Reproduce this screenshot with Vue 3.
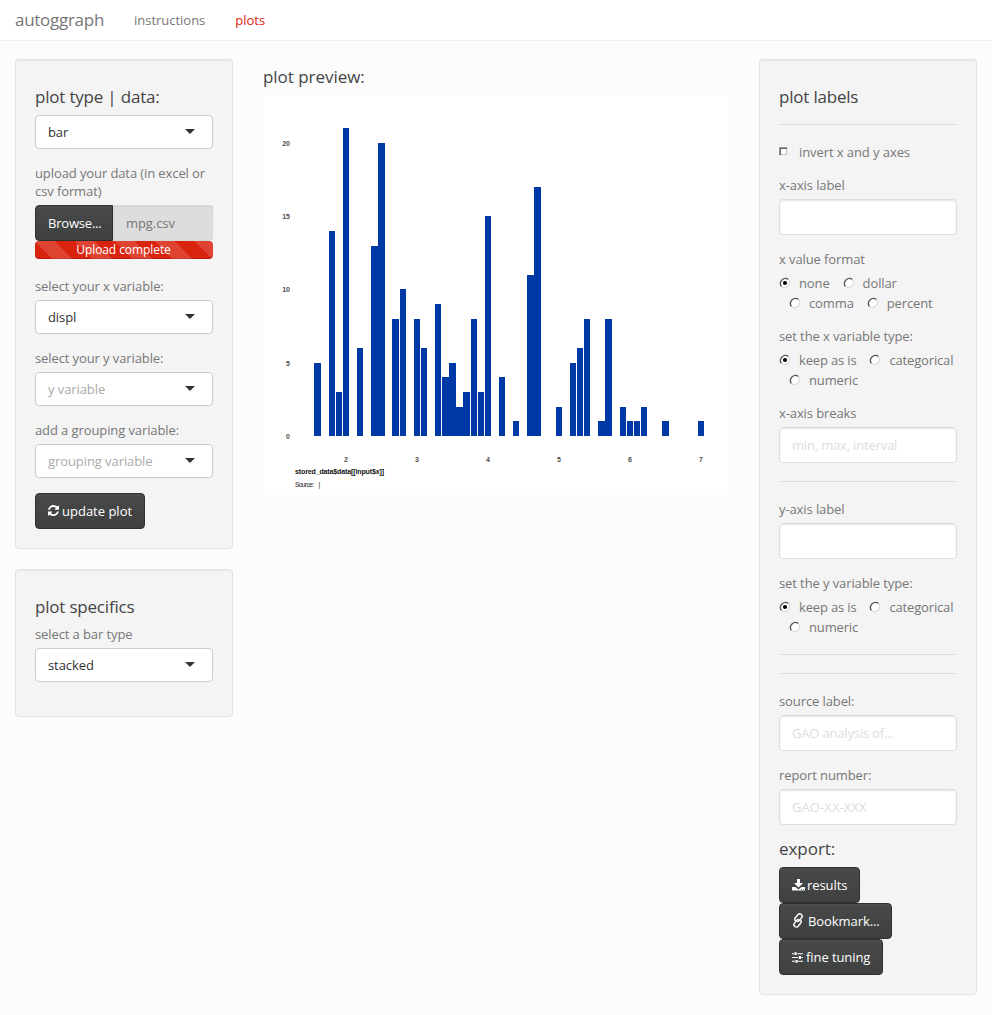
<script setup>
const bars = [
  [314, 7, 5], [329, 6, 14], [336, 6, 3], [343, 6, 21], [357, 6, 6],
  [371, 7, 13], [378, 7, 20], [392, 7, 8], [400, 6, 10], [414, 6, 8],
  [421, 6, 6], [435, 6, 9], [442, 7, 4], [449, 7, 5], [456, 7, 2],
  [463, 7, 3], [471, 6, 8], [478, 6, 3], [485, 6, 15], [499, 6, 4],
  [513, 6, 1], [527, 7, 11], [534, 7, 17], [556, 6, 2], [570, 6, 5],
  [577, 6, 6], [584, 6, 8], [598, 7, 1], [605, 7, 8], [620, 6, 2],
  [627, 6, 1], [634, 6, 1], [641, 6, 2], [662, 7, 1], [698, 6, 1],
]
const heights = { 1: 15, 2: 29, 3: 44, 4: 59, 5: 73, 6: 88, 8: 117, 9: 132, 10: 147, 11: 161, 13: 190, 14: 205, 15: 220, 17: 249, 20: 293, 21: 308 }
const xTicks = [2, 3, 4, 5, 6, 7]
const yTicks = [[20, 51], [15, 124], [10, 197], [5, 271], [0, 344]]
const xFormats = ['none', 'dollar', 'comma', 'percent']
const varTypes = ['keep as is', 'categorical', 'numeric']
</script>

<template>
  <div class="page">
    <nav class="navbar">
      <a class="brand">autoggraph</a>
      <a class="tab">instructions</a>
      <a class="tab active">plots</a>
    </nav>
    <main class="columns">
      <aside class="side">
        <section class="well">
          <h4>plot type | data:</h4>
          <div class="select group">bar</div>
          <label class="lbl">upload your data (in excel or csv format)</label>
          <div class="file">
            <span class="btn browse">Browse...</span>
            <span class="filename">mpg.csv</span>
          </div>
          <div class="progress">Upload complete</div>
          <label class="lbl">select your x variable:</label>
          <div class="select group">displ</div>
          <label class="lbl">select your y variable:</label>
          <div class="select group empty">y variable</div>
          <label class="lbl">add a grouping variable:</label>
          <div class="select group empty">grouping variable</div>
          <button class="btn update">
            <svg class="icon refresh" viewBox="0 0 1536 1664"><path d="M1511 928q0 5-1 7-64 268-268 434.500t-478 166.500q-146 0-282.500-55t-243.500-157l-129 129q-19 19-45 19t-45-19-19-45v-448q0-26 19-45t45-19h448q26 0 45 19t19 45-19 45l-137 137q71 66 161 102t187 36q134 0 250-65t186-179q11-17 53-117 8-23 30-23h192q13 0 22.500 9.500t9.500 22.500zm25-800v448q0 26-19 45t-45 19h-448q-26 0-45-19t-19-45 19-45l138-138q-148-137-349-137-134 0-250 65t-186 179q-11 17-53 117-8 23-30 23h-199q-13 0-22.500-9.500t-9.500-22.500v-7q65-268 270-434.500t480-166.500q146 0 284 55.500t245 156.500l130-129q19-19 45-19t45 19 19 45z" /></svg>
            <span>update plot</span>
          </button>
        </section>
        <section class="well">
          <h4>plot specifics</h4>
          <label class="lbl">select a bar type</label>
          <div class="select group">stacked</div>
        </section>
      </aside>

      <section class="preview">
        <h4>plot preview:</h4>
        <svg class="chart" width="466" height="400" viewBox="0 0 466 400">
          <g fill="#0039a6" shape-rendering="crispEdges">
            <rect v-for="b in bars" :key="b[0]" :x="b[0] - 263" :y="341 - heights[b[2]]" :width="b[1]" :height="heights[b[2]]" />
          </g>
          <g class="tick">
            <text v-for="t in yTicks" :key="t[0]" x="27" :y="t[1]" text-anchor="end">{{ t[0] }}</text>
            <text v-for="t in xTicks" :key="t" :x="83 + (t - 2) * 71" y="367" text-anchor="middle">{{ t }}</text>
          </g>
          <text class="axis-title" x="32" y="379" textLength="89">stored_data$data[[input$x]]</text>
          <text class="source" x="32" y="392" textLength="19">Source:</text>
          <text class="source" x="55.500" y="391.500">|</text>
        </svg>
      </section>

      <aside class="side">
        <section class="well">
          <h4>plot labels</h4>
          <hr>
          <div class="check group"><i class="box"></i><span>invert x and y axes</span></div>
          <label class="lbl">x-axis label</label>
          <input class="field group" type="text">
          <label class="lbl">x value format</label>
          <div class="radios">
            <span v-for="(o, i) in xFormats" :key="o" class="radio">
              <svg class="dot" viewBox="0 0 12 12"><circle cx="6" cy="6" r="5" fill="#fff" /><path class="dark" d="M2.500 9.500A5 5 0 0 1 9.500 2.500" /><path class="light" d="M9.500 2.500A5 5 0 0 1 2.500 9.500" /><circle v-if="i === 0" cx="6" cy="6" r="2.100" fill="#000" /></svg>{{ o }}
            </span>
          </div>
          <label class="lbl">set the x variable type:</label>
          <div class="radios types">
            <span v-for="(o, i) in varTypes" :key="o" class="radio">
              <svg class="dot" viewBox="0 0 12 12"><circle cx="6" cy="6" r="5" fill="#fff" /><path class="dark" d="M2.500 9.500A5 5 0 0 1 9.500 2.500" /><path class="light" d="M9.500 2.500A5 5 0 0 1 2.500 9.500" /><circle v-if="i === 0" cx="6" cy="6" r="2.100" fill="#000" /></svg>{{ o }}
            </span>
          </div>
          <label class="lbl">x-axis breaks</label>
          <input class="field" type="text" placeholder="min, max, interval">
          <hr>
          <label class="lbl">y-axis label</label>
          <input class="field group" type="text">
          <label class="lbl">set the y variable type:</label>
          <div class="radios types last">
            <span v-for="(o, i) in varTypes" :key="o" class="radio">
              <svg class="dot" viewBox="0 0 12 12"><circle cx="6" cy="6" r="5" fill="#fff" /><path class="dark" d="M2.500 9.500A5 5 0 0 1 9.500 2.500" /><path class="light" d="M9.500 2.500A5 5 0 0 1 2.500 9.500" /><circle v-if="i === 0" cx="6" cy="6" r="2.100" fill="#000" /></svg>{{ o }}
            </span>
          </div>
          <hr>
          <hr>
          <label class="lbl">source label:</label>
          <input class="field group" type="text" placeholder="GAO analysis of...">
          <label class="lbl">report number:</label>
          <input class="field group report" type="text" placeholder="GAO-XX-XXX">
          <h4 class="export">export:</h4>
          <div class="buttons">
            <button class="btn results">
              <svg class="icon download" viewBox="0 0 13 12"><path d="M5 0h3v4h3L6.500 8.500 2 4h3zM.5 8h3l3 2.500 3-2.500h3q.5 0 .5.5v2.500q0 .5-.5.5h-12q-.5 0-.5-.5v-2.500q0-.5.5-.5z" /><path class="hole" d="M9 10h1v.8H9zM11 10h1v.8h-1z" /></svg>
              <span>results</span>
            </button>
            <button class="btn bookmark">
              <svg class="icon link" viewBox="0 0 12 13"><g transform="rotate(40 6 6.500)"><path d="M4.400 8.400A2.400 2.400 0 0 1 2.200 6V2.200a2.400 2.400 0 0 1 4.800 0V6a1.800 1.800 0 0 1-1.200 1.800" /><path d="M7.600 4.600A2.400 2.400 0 0 1 9.800 7V10.800a2.400 2.400 0 0 1-4.800 0V7a1.800 1.800 0 0 1 1.200-1.800" /></g></svg>
              <span>Bookmark...</span>
            </button>
            <button class="btn tuning">
              <svg class="icon sliders" viewBox="0 0 11 11"><path d="M0 1.200h2v1H0zM5.500 1.200H11v1H5.500zM2.500.3h2.200v2.800H2.500zM0 5h6v1H0zM9.500 5H11v1H9.500zM6.800 4.100H9v2.800H6.800zM0 8.800h3v1H0zM6.300 8.800H11v1H6.300zM3.500 7.900h2.200v2.800H3.500z" /></svg>
              <span>fine tuning</span>
            </button>
          </div>
        </section>
      </aside>
    </main>
  </div>
</template>

<style>
body { margin: 0; background: #fcfcfc; }
</style>

<style scoped>
.page {
  min-height: 1015px;
  background: #fcfcfc;
  color: #777;
  font: 13px/18px "Open Sans", "Noto Sans", sans-serif;
  letter-spacing: -.08px;
}
.page *, .page *::after { box-sizing: border-box; }
.navbar {
  display: flex;
  align-items: center;
  height: 41px;
  padding: 0 15px;
  background: #fff;
  border-bottom: 1px solid #eee;
}
.brand { width: 89px; font-size: 17px; letter-spacing: -.28px; margin-right: 30px; }
.tab { margin-right: 30px; letter-spacing: -.02px; }
.tab.active { color: #d9230f; }
.columns {
  display: grid;
  grid-template-columns: 218px 466px 218px;
  gap: 30px;
  padding: 18px 15px 0;
  align-items: start;
}
.well {
  padding: 19px;
  margin-bottom: 20px;
  background: #f4f4f4;
  border: 1px solid #e3e3e3;
  border-radius: 4px;
  box-shadow: inset 0 1px 1px rgba(0, 0, 0, .05);
}
h4 {
  margin: 9px 0;
  color: #444;
  font-size: 17px;
  font-weight: 400;
  line-height: 18px;
  letter-spacing: -.2px;
}
.preview h4, h4.export { letter-spacing: -.04px; }
hr { margin: 18px 0; border: 0; border-top: 1px solid #ddd; }
.lbl { display: block; margin-bottom: 5px; letter-spacing: -.1px; }
.group { margin-bottom: 15px; }
.select {
  display: flex;
  align-items: center;
  justify-content: space-between;
  height: 34px;
  padding: 0 17px 0 12px;
  color: #333;
  background: #fff;
  border: 1px solid #ccc;
  border-radius: 4px;
}
.select::after {
  content: "";
  border: solid transparent;
  border-width: 5px 5px 0;
  border-top-color: #333;
  margin-top: -1px;
}
.select.empty { color: #aaa; }
.btn {
  display: flex;
  align-items: center;
  height: 36px;
  padding: 0 12px;
  color: #fff;
  font: inherit;
  letter-spacing: -.08px;
  white-space: nowrap;
  background: linear-gradient(#4f5151, #474949 6%, #3f4141);
  border: 1px solid #2e2f2f;
  border-radius: 4px;
}
.update { width: 110px; letter-spacing: 0; }
.icon { flex: none; fill: #fff; }
.refresh { width: 11px; height: 12px; margin-right: 3px; }
.download { width: 13px; height: 12px; margin-right: 2px; margin-top: -1px; }
.hole { fill: #444646; }
.link { width: 12px; height: 13px; margin-right: 4px; margin-top: -2px; fill: none; stroke: #fff; stroke-width: 1.400; overflow: visible; }
.sliders { width: 11px; height: 11px; margin-right: 3px; margin-top: 1px; }
.file { display: flex; }
.browse { border-radius: 4px 0 0 4px; width: 78px; letter-spacing: -.2px; }
.filename {
  flex: 1;
  height: 36px;
  padding: 9px 13px;
  background: #ddd;
  border-radius: 0 4px 4px 0;
  box-shadow: inset 0 0 0 1px #d8d8d8, inset 0 1px 2px rgba(0, 0, 0, .1);
}
.progress {
  height: 18px;
  margin-bottom: 18px;
  padding-right: 1px;
  color: #fff;
  font-size: 12px;
  text-align: center;
  background-color: #d9230f;
  background-image: linear-gradient(45deg, rgba(255, 255, 255, .15) 25%, transparent 25%, transparent 50%, rgba(255, 255, 255, .15) 50%, rgba(255, 255, 255, .15) 75%, transparent 75%);
  background-size: 40px 40px;
  border-radius: 4px;
  box-shadow: inset 0 -1px 0 rgba(0, 0, 0, .15);
}
.chart { display: block; background: #fff; letter-spacing: 0; }
.tick { font: bold 7px "Liberation Sans", sans-serif; fill: #4d4d4d; }
.axis-title { font: bold 7px "Liberation Sans", sans-serif; fill: #111; }
.source { font: 6.500px "Liberation Sans", sans-serif; fill: #222; }
.check { display: flex; }
.box {
  width: 9px;
  height: 9px;
  margin: 4px 11px 0 0;
  background: #fff;
  border: 1px solid;
  border-color: #999 #eee #eee #999;
  box-shadow: inset 1px 1px 0 #666, inset -1px -1px 0 #c8c6c0;
}
.field {
  display: block;
  width: 100%;
  height: 36px;
  padding: 8px 12px;
  color: #777;
  font: inherit;
  letter-spacing: -.18px;
  background: #fff;
  border: 1px solid #ddd;
  border-radius: 4px;
  outline: 0;
  box-shadow: inset 0 1px 2px rgba(0, 0, 0, .1);
}
.field.report { letter-spacing: .08px; }
.field.group { margin-bottom: 15px; }
.field::placeholder { color: #ddd; opacity: 1; }
.radios {
  display: flex;
  flex-wrap: wrap;
  column-gap: 3px;
  margin: 0 -3px 14px 0;
  letter-spacing: -.12px;
}
.radios.types { letter-spacing: -.16px; }
.radios.last { margin-bottom: 0; }
.radios.last + hr { margin-top: 17px; }
.radio { display: flex; align-items: center; line-height: 20px; }
.radio + .radio { margin-left: 10px; }
.dot { width: 12px; height: 12px; margin-right: 8px; }
.dark, .light { fill: none; stroke-width: 1.300; }
.dark { stroke: #555; }
.light { stroke: #ddd; }
.export { margin-top: 15px; }
.buttons { display: flex; flex-direction: column; align-items: flex-start; }
.results { width: 81px; }
.bookmark { width: 113px; }
.tuning { width: 104px; }
</style>
